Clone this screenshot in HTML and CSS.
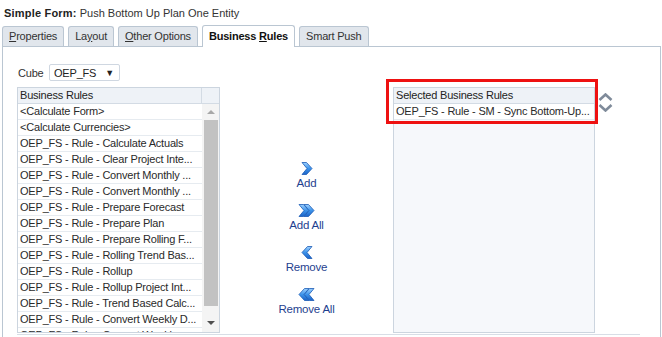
FILE: index.html
```html
<!DOCTYPE html>
<html>
<head>
<meta charset="utf-8">
<link rel="stylesheet" href="styles.css">
</head>
<body>
<div class="title"><b>Simple Form:</b> Push Bottom Up Plan One Entity</div>
<div class="tabs">
  <div class="tab"><u>P</u>roperties</div>
  <div class="tab">La<u>y</u>out</div>
  <div class="tab"><u>O</u>ther Options</div>
  <div class="tab active">Business <u>R</u>ules</div>
  <div class="tab">Smart Push</div>
</div>
<div class="panel">
  <div class="cube-row">
    <span class="cube-label">Cube</span>
    <div class="select"><span>OEP_FS</span><span class="caret">▼</span></div>
  </div>
  <div class="shuttle">
    <div class="list left">
      <div class="list-head"><div class="head-cell">Business Rules</div><div class="head-corner"></div></div>
      <div class="list-body">
        <div class="rows">
          <div class="row">&lt;Calculate Form&gt;</div>
          <div class="row">&lt;Calculate Currencies&gt;</div>
          <div class="row">OEP_FS - Rule - Calculate Actuals</div>
          <div class="row">OEP_FS - Rule - Clear Project Inte...</div>
          <div class="row">OEP_FS - Rule - Convert Monthly ...</div>
          <div class="row">OEP_FS - Rule - Convert Monthly ...</div>
          <div class="row">OEP_FS - Rule - Prepare Forecast</div>
          <div class="row">OEP_FS - Rule - Prepare Plan</div>
          <div class="row">OEP_FS - Rule - Prepare Rolling F...</div>
          <div class="row">OEP_FS - Rule - Rolling Trend Bas...</div>
          <div class="row">OEP_FS - Rule - Rollup</div>
          <div class="row">OEP_FS - Rule - Rollup Project Int...</div>
          <div class="row">OEP_FS - Rule - Trend Based Calc...</div>
          <div class="row">OEP_FS - Rule - Convert Weekly D...</div>
          <div class="row">OEP_FS - Rule - Convert Weekly ...</div>
        </div>
        <div class="scrollbar">
          <div class="sb-btn"><span class="tri-up"></span></div>
          <div class="sb-thumb"></div>
          <div class="sb-btn sb-down"><span class="tri-down"></span></div>
        </div>
      </div>
    </div>
    <div class="actions">
      <div class="action">
        <svg class="ico" width="12" height="13" viewBox="0 0 12 13"><defs><linearGradient id="g1" x1="0" y1="0" x2="0" y2="1"><stop offset="0" stop-color="#9fd2ff"/><stop offset="0.5" stop-color="#3d93ea"/><stop offset="1" stop-color="#1c64c8"/></linearGradient></defs><polygon points="1,0.5 5.5,0.5 11,6.5 5.5,12.5 1,12.5 6,6.5" fill="url(#g1)" stroke="#1a5bb5" stroke-width="0.8" stroke-linejoin="round"/></svg>
        <span class="lbl">Add</span>
      </div>
      <div class="action">
        <svg class="ico" width="17" height="13" viewBox="0 0 17 13"><polygon points="1,0.5 5.5,0.5 11,6.5 5.5,12.5 1,12.5 6,6.5" fill="url(#g1)" stroke="#1a5bb5" stroke-width="0.8" stroke-linejoin="round"/><polygon points="6,0.5 10.5,0.5 16,6.5 10.5,12.5 6,12.5 11,6.5" fill="url(#g1)" stroke="#1a5bb5" stroke-width="0.8" stroke-linejoin="round"/></svg>
        <span class="lbl">Add All</span>
      </div>
      <div class="action">
        <svg class="ico" width="12" height="13" viewBox="0 0 12 13"><polygon points="11,0.5 6.5,0.5 1,6.5 6.5,12.5 11,12.5 6,6.5" fill="url(#g1)" stroke="#1a5bb5" stroke-width="0.8" stroke-linejoin="round"/></svg>
        <span class="lbl">Remove</span>
      </div>
      <div class="action">
        <svg class="ico" width="17" height="13" viewBox="0 0 17 13"><polygon points="16,0.5 11.5,0.5 6,6.5 11.5,12.5 16,12.5 11,6.5" fill="url(#g1)" stroke="#1a5bb5" stroke-width="0.8" stroke-linejoin="round"/><polygon points="11,0.5 6.5,0.5 1,6.5 6.5,12.5 11,12.5 6,6.5" fill="url(#g1)" stroke="#1a5bb5" stroke-width="0.8" stroke-linejoin="round"/></svg>
        <span class="lbl">Remove All</span>
      </div>
    </div>
    <div class="selected-wrap">
      <div class="list right">
        <div class="list-head"><div class="head-cell">Selected Business Rules</div></div>
        <div class="row sel-row">OEP_FS - Rule - SM - Sync Bottom-Up...</div>
      </div>
      <div class="order">
        <svg width="15" height="8" viewBox="0 0 15 8"><polyline points="1.5,7 7.5,1.5 13.5,7" fill="none" stroke="#7f8b9a" stroke-width="2.6"/></svg>
        <svg width="15" height="8" viewBox="0 0 15 8"><polyline points="1.5,1 7.5,6.5 13.5,1" fill="none" stroke="#7f8b9a" stroke-width="2.6"/></svg>
      </div>
      <div class="highlight"></div>
    </div>
  </div>
  <div class="footer-line"></div>
</div>
</body>
</html>
```

FILE: styles.css
```css
html, body {
  margin: 0;
  padding: 0;
  background: #ffffff;
  overflow: hidden;
}
body {
  width: 662px;
  height: 337px;
  font-family: "Liberation Sans", Arial, sans-serif;
  font-size: 11px;
  letter-spacing: -0.2px;
  color: #333333;
}
.title {
  height: 19px;
  padding: 6px 0 0 4px;
  line-height: 14px;
  box-sizing: border-box;
  color: #333;
  letter-spacing: 0;
}
.title b {
  color: #222;
  letter-spacing: 0.2px;
}
.tabs {
  display: flex;
  align-items: flex-end;
  gap: 4px;
  height: 21px;
  margin-top: 6px;
  padding-left: 2px;
  position: relative;
  z-index: 2;
}
.tab {
  height: 20px;
  box-sizing: border-box;
  padding: 0 6px;
  line-height: 19px;
  background: #e1e6ec;
  border: 1px solid #bac6d2;
  border-bottom: none;
  border-radius: 3px 3px 0 0;
  color: #333;
}
.tab.active {
  height: 22px;
  margin-bottom: -1px;
  background: #ffffff;
  font-weight: bold;
  color: #111;
  line-height: 21px;
}
.panel {
  margin-left: 2px;
  width: 659px;
  height: 300px;
  box-sizing: border-box;
  border: 1px solid #bac6d2;
  border-bottom: none;
  padding: 17px 0 0 14px;
  position: relative;
}
.cube-row {
  display: flex;
  align-items: center;
  height: 17px;
}
.cube-label {
  margin-left: 1px;
  width: 31px;
}
.select {
  width: 71px;
  height: 17px;
  box-sizing: border-box;
  border: 1px solid #cfd7e1;
  border-radius: 2px;
  display: flex;
  align-items: center;
  justify-content: space-between;
  padding: 0 5px 0 4px;
  color: #222;
}
.caret {
  font-size: 9px;
  color: #222;
}
.shuttle {
  display: flex;
  margin-top: 6px;
}
.list {
  box-sizing: border-box;
  height: 246px;
  border: 1px solid #ccd5df;
  overflow: hidden;
}
.list.left {
  width: 203px;
}
.list-head {
  display: flex;
  height: 16px;
  background: #eef2f7;
  border-bottom: 1px solid #d3dbe4;
  box-sizing: border-box;
}
.head-cell {
  flex: 1;
  padding-left: 2px;
  line-height: 15px;
  color: #222;
}
.head-corner {
  width: 17px;
  border-left: 1px solid #d3dbe4;
}
.list-body {
  display: flex;
}
.rows {
  width: 184px;
}
.row {
  height: 16px;
  box-sizing: border-box;
  border-bottom: 1px solid #e6ebf0;
  padding-left: 2px;
  line-height: 15px;
  white-space: nowrap;
  overflow: hidden;
  color: #2a2a2a;
  background: #fff;
}
.scrollbar {
  width: 17px;
  display: flex;
  flex-direction: column;
  align-items: center;
  background: #f4f4f4;
}
.sb-btn {
  height: 16px;
  width: 14px;
  display: flex;
  align-items: center;
  justify-content: center;
}
.sb-down {
  margin-top: 9px;
}
.tri-up {
  width: 0;
  height: 0;
  border-left: 4px solid transparent;
  border-right: 4px solid transparent;
  border-bottom: 4px solid #a8a8a8;
}
.tri-down {
  width: 0;
  height: 0;
  border-left: 4px solid transparent;
  border-right: 4px solid transparent;
  border-top: 4px solid #505050;
}
.sb-thumb {
  width: 14px;
  height: 186px;
  background: #c2c2c2;
}
.actions {
  width: 173px;
  display: flex;
  flex-direction: column;
  align-items: center;
  gap: 14px;
  padding-top: 75px;
}
.action {
  display: flex;
  flex-direction: column;
  align-items: center;
}
.ico {
  display: block;
  margin-bottom: 1px;
}
.lbl {
  line-height: 14px;
  color: #1f3f8f;
  font-size: 11.5px;
}
.selected-wrap {
  display: flex;
  gap: 3px;
  position: relative;
}
.list.right {
  width: 202px;
  background: #f6f8fb;
}
.sel-row {
  color: #2a2a2a;
}
.order {
  display: flex;
  flex-direction: column;
  gap: 3px;
  padding-top: 6px;
}
.order svg {
  display: block;
}
.highlight {
  position: absolute;
  left: -7px;
  top: -8px;
  width: 212px;
  height: 45px;
  box-sizing: border-box;
  border: 3px solid #ee1111;
}
.footer-line {
  margin-top: 1px;
  margin-left: 0;
  width: 623px;
  border-top: 1px solid #d8dee6;
}
```
